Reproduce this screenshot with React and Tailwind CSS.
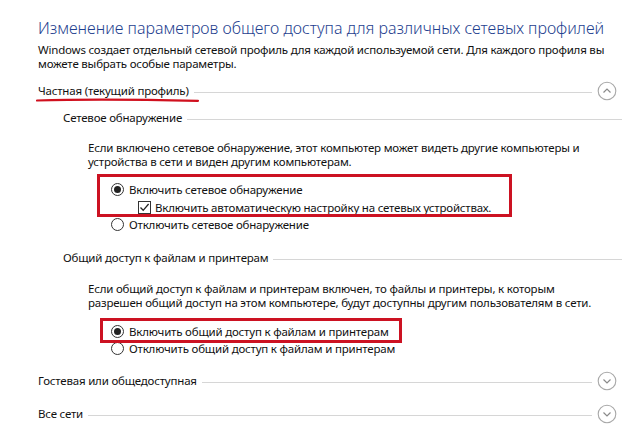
import React from 'react'

const font = { fontFamily: '"Noto Sans", "Open Sans", sans-serif' }

function Chevron({ up }) {
  return (
    <svg width="20" height="20" viewBox="0 0 20 20" className="shrink-0">
      <circle cx="10" cy="10" r="8.8" fill="none" stroke="#a8a8a8" strokeWidth="1.1" />
      {up ? (
        <path d="M6.5 11.5 L10 8 L13.5 11.5" fill="none" stroke="#8a8a8a" strokeWidth="1.2" />
      ) : (
        <path d="M6.5 8.5 L10 12 L13.5 8.5" fill="none" stroke="#8a8a8a" strokeWidth="1.2" />
      )}
    </svg>
  )
}

function Radio({ checked }) {
  return (
    <span className="w-[13px] h-[13px] rounded-full border border-[#333] bg-white flex items-center justify-center shrink-0">
      {checked && <span className="w-[7px] h-[7px] rounded-full bg-[#222]" />}
    </span>
  )
}

function Checkbox() {
  return (
    <span className="w-[13px] h-[13px] border border-[#333] bg-white flex items-center justify-center shrink-0">
      <svg width="11" height="11" viewBox="0 0 11 11">
        <path d="M1.5 5.5 L4.2 8.3 L9.6 2" fill="none" stroke="#222" strokeWidth="1.3" />
      </svg>
    </span>
  )
}

function ProfileRow({ title, up, children }) {
  return (
    <div className="relative flex items-center h-[18px] gap-[5px]">
      <span className="whitespace-nowrap">{title}</span>
      <span className="flex-1 h-px bg-[#d6d6d6] mt-[2px]" />
      <Chevron up={up} />
      {children}
    </div>
  )
}

function SectionRow({ title }) {
  return (
    <div className="flex items-center h-[18px] gap-[5px] -mr-[5px]">
      <span className="whitespace-nowrap">{title}</span>
      <span className="flex-1 h-px bg-[#d6d6d6] mt-[2px]" />
    </div>
  )
}

export default function App() {
  return (
    <div
      className="w-[640px] h-[436px] bg-white overflow-hidden pl-[38px] pr-[23px] pt-[18px] text-[#111] text-[11.5px] leading-[18px] tracking-[-0.2px]"
      style={font}
    >
      <h1 className="text-[16px] leading-[20px] font-light text-[#1f3f8f] whitespace-nowrap tracking-[0px]">
        Изменение параметров общего доступа для различных сетевых профилей
      </h1>

      <p className="mt-[5px] leading-[14px] whitespace-nowrap">
        Windows создает отдельный сетевой профиль для каждой используемой сети. Для каждого профиля вы
        <br />
        можете выбрать особые параметры.
      </p>

      <div className="mt-[11px]">
        <ProfileRow title="Частная (текущий профиль)" up>
          <svg className="absolute left-[-2px] top-[15px]" width="164" height="6" viewBox="0 0 164 6">
            <path d="M1 3.5 C 40 2.2, 110 2.6, 162 3.8" fill="none" stroke="#d0101e" strokeWidth="2.2" strokeLinecap="round" />
          </svg>
        </ProfileRow>
      </div>

      <div className="pl-[25px]">
        <div className="mt-[9px]">
          <SectionRow title="Сетевое обнаружение" />
        </div>
        <div className="pl-[25px]">
          <p className="mt-[14px] leading-[14px] whitespace-nowrap">
            Если включено сетевое обнаружение, этот компьютер может видеть другие компьютеры и
            <br />
            устройства в сети и виден другим компьютерам.
          </p>
          <div className="relative mt-[12px] ml-[23px] leading-[17px] whitespace-nowrap">
            <div className="absolute left-[-14px] top-[-7px] w-[415px] h-[43px] border-[3px] border-[#cc1222]" />
            <div className="flex items-center gap-[5px] h-[17px]">
              <Radio checked />
              <span>Включить сетевое обнаружение</span>
            </div>
            <div className="flex items-center gap-[4px] h-[18px] pl-[27px]">
              <Checkbox />
              <span>Включить автоматическую настройку на сетевых устройствах.</span>
            </div>
            <div className="flex items-center gap-[5px] h-[16px]">
              <Radio />
              <span>Отключить сетевое обнаружение</span>
            </div>
          </div>
        </div>

        <div className="mt-[17px]">
          <SectionRow title="Общий доступ к файлам и принтерам" />
        </div>
        <div className="pl-[25px]">
          <p className="mt-[15px] leading-[14px] whitespace-nowrap">
            Если общий доступ к файлам и принтерам включен, то файлы и принтеры, к которым
            <br />
            разрешен общий доступ на этом компьютере, будут доступны другим пользователям в сети.
          </p>
          <div className="relative mt-[13px] ml-[23px] leading-[17px] whitespace-nowrap">
            <div className="absolute left-[-11px] top-[-5px] w-[302px] h-[25px] border-[3px] border-[#cc1222]" />
            <div className="flex items-center gap-[5px] h-[17px]">
              <Radio checked />
              <span>Включить общий доступ к файлам и принтерам</span>
            </div>
            <div className="flex items-center gap-[5px] h-[16px]">
              <Radio />
              <span>Отключить общий доступ к файлам и принтерам</span>
            </div>
          </div>
        </div>
      </div>

      <div className="mt-[16px]">
        <ProfileRow title="Гостевая или общедоступная" />
      </div>
      <div className="mt-[15px]">
        <ProfileRow title="Все сети" />
      </div>
    </div>
  )
}
